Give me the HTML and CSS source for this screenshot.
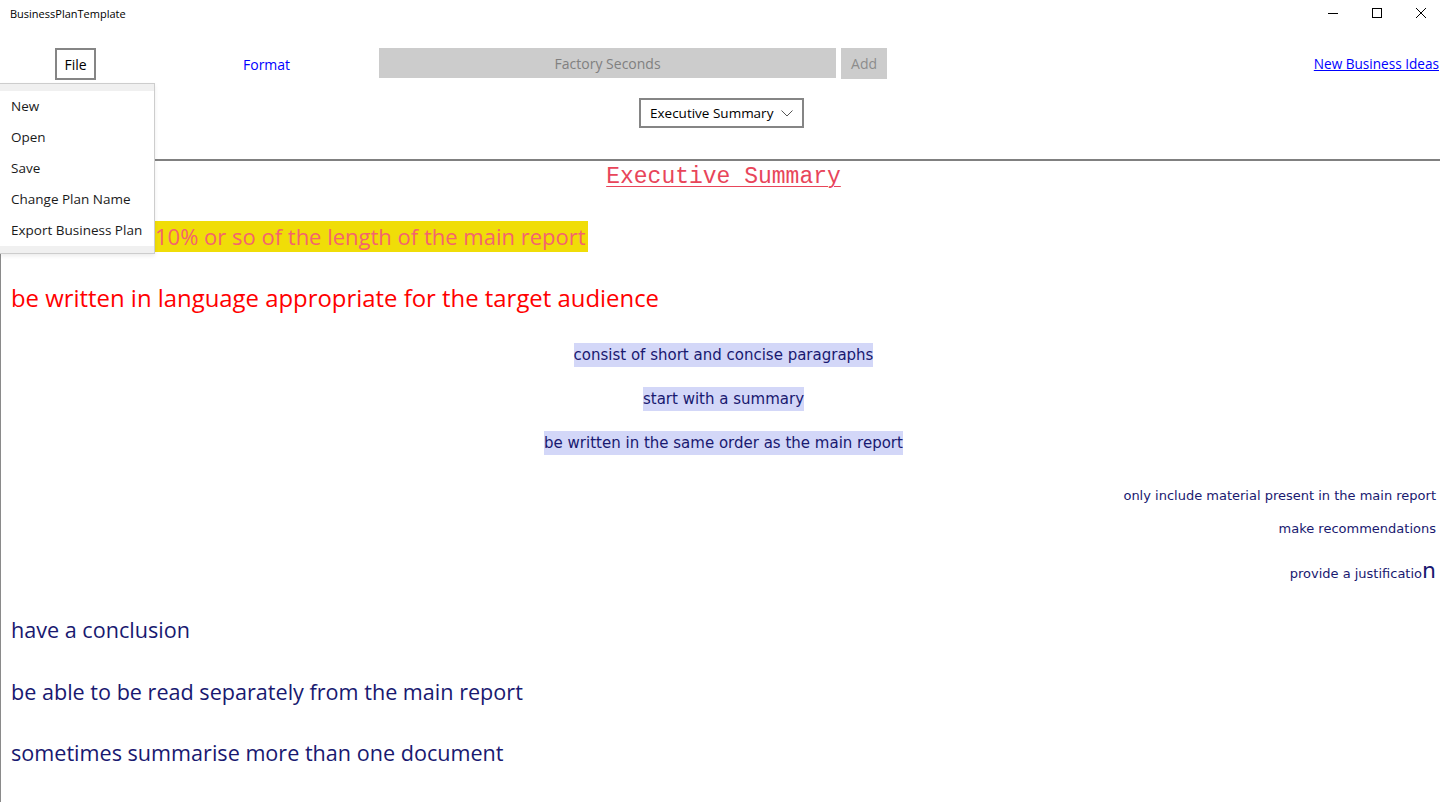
FILE: index.html
```html
<!DOCTYPE html>
<html lang="en">
<head>
    <meta charset="UTF-8">
    <title>BusinessPlanTemplate</title>
    <link rel="stylesheet" href="styles.css">
</head>
<body>
    <!-- Title bar -->
    <div class="titlebar">
        <span class="app-title">BusinessPlanTemplate</span>
        <div class="window-controls">
            <svg width="10" height="10" viewBox="0 0 10 10"><path d="M0 5.5H10" stroke="#000" stroke-width="1"/></svg>
            <svg width="10" height="10" viewBox="0 0 10 10"><rect x="0.5" y="0.5" width="9" height="9" fill="none" stroke="#000" stroke-width="1"/></svg>
            <svg width="10" height="10" viewBox="0 0 10 10"><path d="M0 0L10 10M10 0L0 10" stroke="#000" stroke-width="1"/></svg>
        </div>
    </div>

    <!-- Toolbar -->
    <div class="toolbar">
        <button class="file-button">File</button>
        <button class="format-button">Format</button>
        <input class="idea-input" type="text" placeholder="Factory Seconds">
        <button class="add-button">Add</button>
        <a class="ideas-link" href="#">New Business Ideas</a>
    </div>

    <!-- Section picker -->
    <div class="picker-row">
        <div class="section-select">
            <span>Executive Summary</span>
            <svg width="12" height="7" viewBox="0 0 12 7"><path d="M0.5 0.5L6 6L11.5 0.5" fill="none" stroke="#555" stroke-width="1"/></svg>
        </div>
    </div>

    <!-- Document -->
    <div class="document">
        <h1 class="doc-title">Executive Summary</h1>
        <p class="line big l-yellow"><span class="hl-yellow">10% or so of the length of the main report</span></p>
        <p class="line big l-red red">be written in language appropriate for the target audience</p>
        <p class="line mid l-c1"><span class="hl-blue">consist of short and concise paragraphs</span></p>
        <p class="line mid l-c2"><span class="hl-blue">start with a summary</span></p>
        <p class="line mid l-c3"><span class="hl-blue">be written in the same order as the main report</span></p>
        <p class="line small l-r1">only include material present in the main report</p>
        <p class="line small l-r2">make recommendations</p>
        <p class="line small l-r3">provide a justificatio<span class="big-n">n</span></p>
        <p class="line big l-n1">have a conclusion</p>
        <p class="line big l-n2">be able to be read separately from the main report</p>
        <p class="line big l-n3">sometimes summarise more than one document</p>
    </div>

    <!-- Open File menu -->
    <ul class="file-menu">
        <li>New</li>
        <li>Open</li>
        <li>Save</li>
        <li>Change Plan Name</li>
        <li>Export Business Plan</li>
    </ul>
</body>
</html>
```

FILE: styles.css
```css
:root {
    --ui-font: 'Open Sans', 'Noto Sans', Arial, sans-serif;
    --navy: #191970;
    --border-gray: #858585;
    --field-gray: #cccccc;
}
body {
    margin: 0;
    font-family: var(--ui-font);
    background: #fff;
    color: #000;
    position: relative;
    overflow: hidden;
    height: 802px;
}
.titlebar {
    height: 26px;
    display: flex;
    align-items: center;
    justify-content: space-between;
    padding: 0 14px 0 10px;
}
.app-title {
    font-size: 11px;
}
.window-controls {
    display: flex;
    gap: 34px;
}
.window-controls svg {
    display: block;
}
.toolbar {
    display: flex;
    align-items: flex-start;
    height: 32px;
    margin-top: 22px;
    padding-right: 1px;
}
.toolbar button,
.toolbar input {
    font-family: var(--ui-font);
    font-size: 14px;
    box-sizing: border-box;
}
.file-button {
    margin-left: 55px;
    width: 41px;
    height: 32px;
    padding: 0;
    background: #fff;
    border: 2px solid var(--border-gray);
    color: #000;
}
.format-button {
    margin-left: 147px;
    height: 32px;
    padding: 0;
    border: none;
    background: none;
    color: #0000ff;
}
.idea-input {
    margin-left: 89px;
    width: 457px;
    height: 30px;
    border: none;
    background: var(--field-gray);
    text-align: center;
    outline: none;
}
.idea-input::placeholder {
    color: #808080;
}
.add-button {
    margin-left: 5px;
    width: 46px;
    height: 31px;
    padding: 0;
    border: none;
    background: var(--field-gray);
    color: #8c8c8c;
}
.ideas-link {
    margin-left: auto;
    font-size: 13.6px;
    line-height: 32px;
    color: #0000ff;
}
.picker-row {
    display: flex;
    justify-content: center;
    padding-left: 3px;
    margin-top: 18px;
}
.section-select {
    box-sizing: border-box;
    width: 165px;
    height: 30px;
    border: 2px solid var(--border-gray);
    display: flex;
    align-items: center;
    justify-content: space-between;
    padding: 0 9px 0 9px;
    font-size: 13.5px;
}
.document {
    margin-top: 31px;
    border-top: 2px solid #808080;
    border-left: 1px solid #8a8a8a;
    padding: 0 4px 0 10px;
    height: 641px;
}
.doc-title {
    margin: 0;
    padding-top: 2px;
    font-family: 'Liberation Mono', 'Courier New', monospace;
    font-weight: normal;
    font-size: 23px;
    line-height: 28px;
    color: #e8455a;
    text-decoration: underline;
    text-underline-offset: 3px;
    text-decoration-thickness: 1px;
    text-align: center;
}
.line {
    margin: 0;
}
.line.big {
    font-size: 21.6px;
    line-height: 31px;
    color: var(--navy);
}
.line.mid {
    font-family: 'DejaVu Sans', Verdana, sans-serif;
    font-size: 15px;
    line-height: 24px;
    text-align: center;
    color: var(--navy);
}
.line.small {
    font-family: 'DejaVu Sans', Verdana, sans-serif;
    font-size: 13px;
    line-height: 16px;
    text-align: right;
    color: var(--navy);
}
.line.red {
    font-size: 23.9px;
    color: #ff0000;
}
.hl-yellow {
    display: inline-block;
    vertical-align: top;
    font-size: 22px;
    background: #f0dd08;
    color: #f4646e;
    padding: 0 2px 0 144px;
}
.hl-blue {
    display: inline-block;
    vertical-align: top;
    background: #d3d7f8;
}
.big-n {
    font-size: 22px;
}
.l-yellow { margin-top: 30px; }
.l-red { margin-top: 30px; }
.l-c1 { margin-top: 30px; }
.l-c2 { margin-top: 20px; }
.l-c3 { margin-top: 20px; }
.l-r1 { margin-top: 33px; }
.l-r2 { margin-top: 17px; }
.l-r3 { margin-top: 26px; line-height: 24px; }
.l-n1 { margin-top: 32px; }
.l-n2 { margin-top: 31px; }
.l-n3 { margin-top: 30px; }
/* File menu flyout */
.file-menu {
    position: absolute;
    top: 83px;
    left: 0;
    width: 155px;
    box-sizing: border-box;
    margin: 0;
    padding: 7px 0;
    list-style: none;
    background: #f0f0f0;
    border: 1px solid #cdcdcd;
    border-left: none;
    box-shadow: 0 2px 4px rgba(0, 0, 0, 0.08);
}
.file-menu li {
    background: #fff;
    height: 31px;
    line-height: 30px;
    padding-left: 11px;
    font-size: 13.5px;
    color: #1a1a1a;
    white-space: nowrap;
}
```
